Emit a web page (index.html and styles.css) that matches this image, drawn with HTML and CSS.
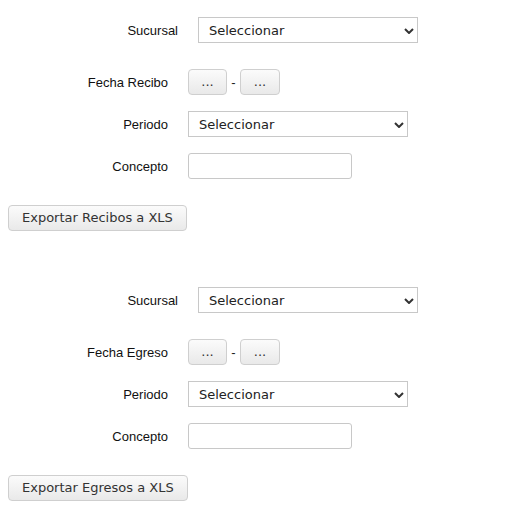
FILE: index.html
```html
<!DOCTYPE html>
<html lang="es">
<head>
<meta charset="utf-8">
<title>Exportar</title>
<link rel="stylesheet" href="styles.css">
</head>
<body>
<div class="page">
  <form class="panel">
    <div class="row row-branch">
      <label class="lbl">Sucursal</label>
      <div class="select-wrap">
        <select class="sel"><option>Seleccionar</option></select>
        <svg class="chev" width="10" height="6" viewBox="0 0 10 6"><path d="M1 1 L5 5 L9 1" fill="none" stroke="#333" stroke-width="2"/></svg>
      </div>
    </div>
    <div class="row row-date">
      <span class="lbl">Fecha Recibo</span>
      <button type="button" class="btn btn-dots">...</button>
      <span class="dash">-</span>
      <button type="button" class="btn btn-dots">...</button>
    </div>
    <div class="row row-tight">
      <label class="lbl">Periodo</label>
      <div class="select-wrap">
        <select class="sel"><option>Seleccionar</option></select>
        <svg class="chev" width="10" height="6" viewBox="0 0 10 6"><path d="M1 1 L5 5 L9 1" fill="none" stroke="#333" stroke-width="2"/></svg>
      </div>
    </div>
    <div class="row row-tight">
      <label class="lbl">Concepto</label>
      <input class="txt" type="text">
    </div>
    <div class="actions">
      <button type="button" class="btn btn-export">Exportar Recibos a XLS</button>
    </div>
  </form>

  <form class="panel">
    <div class="row row-branch">
      <label class="lbl">Sucursal</label>
      <div class="select-wrap">
        <select class="sel"><option>Seleccionar</option></select>
        <svg class="chev" width="10" height="6" viewBox="0 0 10 6"><path d="M1 1 L5 5 L9 1" fill="none" stroke="#333" stroke-width="2"/></svg>
      </div>
    </div>
    <div class="row row-date">
      <span class="lbl">Fecha Egreso</span>
      <button type="button" class="btn btn-dots">...</button>
      <span class="dash">-</span>
      <button type="button" class="btn btn-dots">...</button>
    </div>
    <div class="row row-tight">
      <label class="lbl">Periodo</label>
      <div class="select-wrap">
        <select class="sel"><option>Seleccionar</option></select>
        <svg class="chev" width="10" height="6" viewBox="0 0 10 6"><path d="M1 1 L5 5 L9 1" fill="none" stroke="#333" stroke-width="2"/></svg>
      </div>
    </div>
    <div class="row row-tight">
      <label class="lbl">Concepto</label>
      <input class="txt" type="text">
    </div>
    <div class="actions">
      <button type="button" class="btn btn-export">Exportar Egresos a XLS</button>
    </div>
  </form>
</div>
</body>
</html>
```
FILE: styles.css
```css
* { box-sizing: border-box; }
html, body { margin: 0; padding: 0; background: #fff; }
.page { padding: 17px 8px 0 8px; }
.panel { display: flex; flex-direction: column; margin: 0 0 56px 0; }
.panel:last-child { margin-bottom: 0; }
.row { display: flex; align-items: center; height: 26px; }
.row-branch { padding-left: 10px; }
.row-date { margin-top: 26px; }
.row-tight { margin-top: 16px; }
.actions { margin-top: 26px; display: flex; }
.lbl {
  width: 160px; margin-right: 20px; text-align: right;
  font-family: "Liberation Sans", Arial, sans-serif; font-size: 13px; color: #111;
}
.select-wrap { position: relative; width: 220px; height: 26px; }
.sel {
  -webkit-appearance: none; appearance: none;
  width: 220px; height: 26px; margin: 0;
  border: 1px solid #c8c8c8; border-radius: 0; background: #fff;
  padding: 0 20px 0 10px;
  font-family: "DejaVu Sans", Verdana, sans-serif; font-size: 13px; color: #222;
}
.chev { position: absolute; right: 4px; top: 11px; pointer-events: none; }
.txt {
  width: 164px; height: 26px; margin: 0;
  border: 1px solid #c8c8c8; border-radius: 3px; background: #fff;
  font-family: "DejaVu Sans", Verdana, sans-serif; font-size: 13px;
}
.btn {
  height: 26px; margin: 0;
  border: 1px solid #cfcfcf; border-radius: 4px;
  background: linear-gradient(#fbfbfb, #e9e9e9);
  font-family: "DejaVu Sans", Verdana, sans-serif; font-size: 13px; color: #333;
  line-height: 24px;
}
.btn-dots { width: 39px; padding: 0; }
.btn-dots + .dash + .btn-dots { width: 40px; }
.dash {
  width: 13px; text-align: center;
  font-family: "Liberation Sans", Arial, sans-serif; font-size: 13px; color: #222;
}
.btn-export { padding: 0 13px; }
```
